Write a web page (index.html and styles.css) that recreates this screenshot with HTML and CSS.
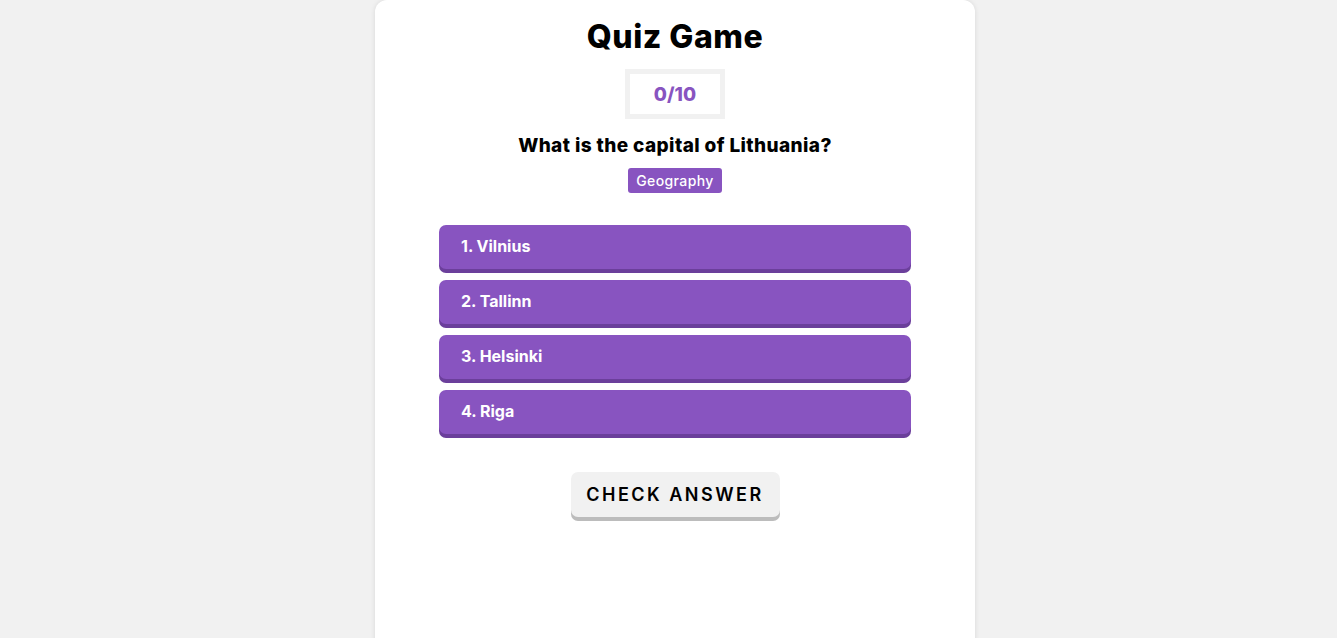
FILE: index.html
```html
<!DOCTYPE html>
<html>
<head>
<meta charset="utf-8">
<link rel="stylesheet" href="styles.css">
</head>
<body>
<main class="card">
  <h1 class="title">Quiz Game</h1>
  <div class="score">0/10</div>
  <h2 class="question">What is the capital of Lithuania?</h2>
  <span class="tag">Geography</span>
  <ul class="options">
    <li class="option">1. Vilnius</li>
    <li class="option">2. Tallinn</li>
    <li class="option">3. Helsinki</li>
    <li class="option">4. Riga</li>
  </ul>
  <button class="check">CHECK ANSWER</button>
</main>
</body>
</html>
```
FILE: styles.css
```css
html, body {
  margin: 0;
  height: 100%;
  background: #f1f1f1;
  font-family: "Inter", "Noto Sans", sans-serif;
}
body {
  padding-left: 13px;
  box-sizing: border-box;
  overflow: hidden;
}
.card {
  width: 600px;
  margin: 0 auto;
  min-height: 700px;
  background: #fff;
  border-radius: 12px 12px 0 0;
  box-shadow: 0 0 5px rgba(0,0,0,0.1);
  display: flex;
  flex-direction: column;
  align-items: center;
  padding: 16px 64px 0;
  box-sizing: border-box;
}
.title {
  margin: 0;
  font-size: 32px;
  font-weight: 800;
  line-height: 42px;
  color: #000;
  letter-spacing: 0.5px;
}
.score {
  margin-top: 11px;
  width: 100px;
  height: 50px;
  box-sizing: border-box;
  border: 5px solid #f1f1f1;
  display: flex;
  align-items: center;
  justify-content: center;
  color: #8854c0;
  font-size: 19px;
  font-weight: 800;
}
.question {
  margin: 15px 0 0;
  font-size: 19px;
  font-weight: 800;
  line-height: 24px;
  color: #000;
  letter-spacing: 0.4px;
}
.tag {
  margin-top: 10px;
  background: #8854c0;
  color: #fff;
  font-size: 14px;
  font-weight: 500;
  line-height: 25px;
  padding: 0 8px;
  border-radius: 3px;
  letter-spacing: 0.4px;
}
.options {
  list-style: none;
  margin: 32px 0 0;
  padding: 0;
  width: 472px;
  display: flex;
  flex-direction: column;
  gap: 7px;
}
.option {
  height: 44px;
  background: #8854c0;
  border-radius: 7px;
  box-shadow: 0 4px 0 #6b3f9b;
  color: #fff;
  font-size: 16px;
  font-weight: 700;
  padding: 11px 22px 0;
  box-sizing: border-box;
  line-height: 20px;
  margin-bottom: 4px;
}
.check {
  margin-top: 34px;
  width: 209px;
  height: 45px;
  border: none;
  background: #f1f1f1;
  border-radius: 7px;
  box-shadow: 0 4px 0 #bcbcbc;
  font-family: inherit;
  font-size: 18px;
  font-weight: 600;
  letter-spacing: 2.5px;
  color: #000;
  padding: 0;
}
```
